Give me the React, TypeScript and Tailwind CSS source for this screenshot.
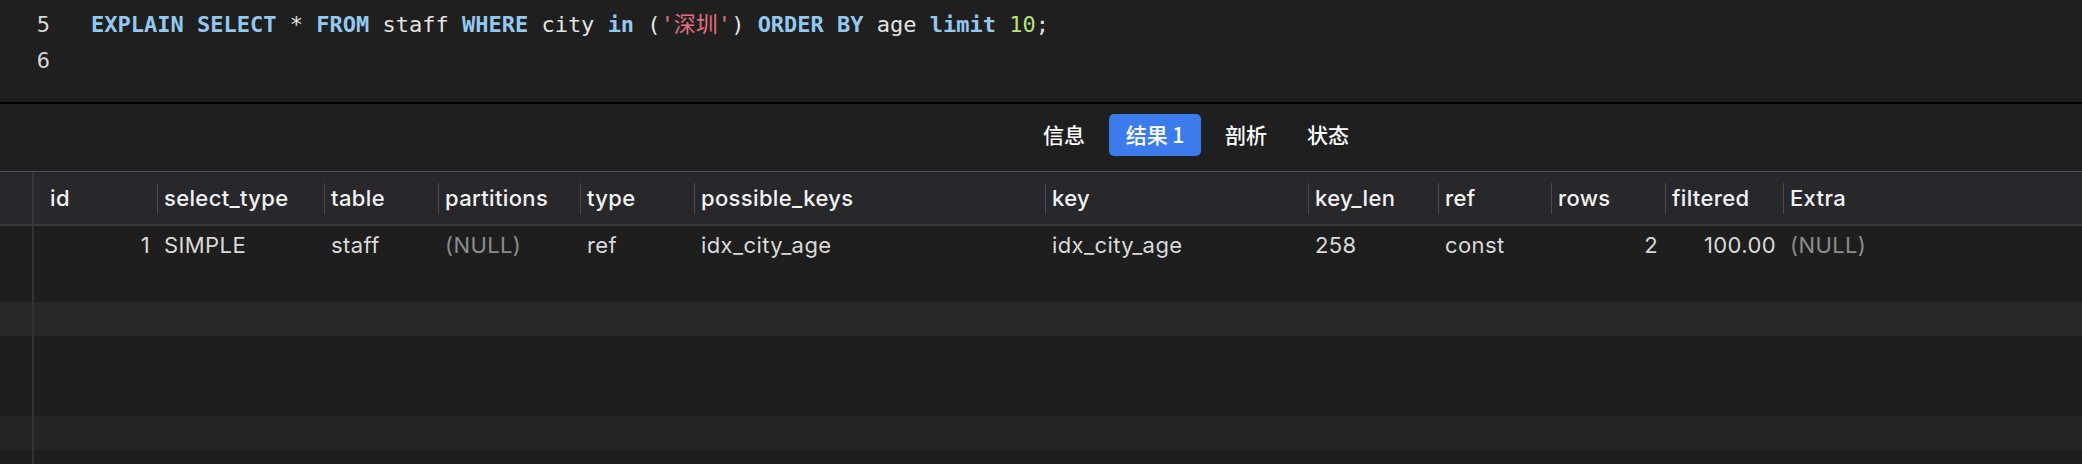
import React from 'react';

type Tok = { t: string; c?: 'kw' | 'str' | 'num' };

const KW = 'text-[#94c9ef] font-bold';

const line5: Tok[] = [
  { t: 'EXPLAIN', c: 'kw' }, { t: ' ' }, { t: 'SELECT', c: 'kw' }, { t: ' * ' },
  { t: 'FROM', c: 'kw' }, { t: ' staff ' }, { t: 'WHERE', c: 'kw' }, { t: ' city ' },
  { t: 'in', c: 'kw' }, { t: ' (' }, { t: "'深圳'", c: 'str' }, { t: ') ' },
  { t: 'ORDER BY', c: 'kw' }, { t: ' age ' }, { t: 'limit', c: 'kw' }, { t: ' ' },
  { t: '10', c: 'num' }, { t: ';' },
];

function tokClass(c?: Tok['c']) {
  if (c === 'kw') return KW;
  if (c === 'str') return 'text-[#e0707f]';
  if (c === 'num') return 'text-[#b8e27b]';
  return 'text-[#e4e4e4]';
}

type Col = { name: string; w: string; right?: boolean };

const cols: Col[] = [
  { name: 'id', w: 'w-[123px]', right: true },
  { name: 'select_type', w: 'w-[167px]' },
  { name: 'table', w: 'w-[114px]' },
  { name: 'partitions', w: 'w-[142px]' },
  { name: 'type', w: 'w-[114px]' },
  { name: 'possible_keys', w: 'w-[351px]' },
  { name: 'key', w: 'w-[263px]' },
  { name: 'key_len', w: 'w-[130px]' },
  { name: 'ref', w: 'w-[113px]' },
  { name: 'rows', w: 'w-[114px]', right: true },
  { name: 'filtered', w: 'w-[118px]', right: true },
  { name: 'Extra', w: 'flex-1' },
];

const row = ['1', 'SIMPLE', 'staff', '(NULL)', 'ref', 'idx_city_age', 'idx_city_age', '258', 'const', '2', '100.00', '(NULL)'];

const tabs = [
  { t: '信息', w: 'w-[74px]' },
  { t: '结果 1', w: 'w-[92px]' },
  { t: '剖析', w: 'w-[74px]' },
  { t: '状态', w: 'w-[74px]' },
];

const gridFont = "font-['Inter','Noto_Sans_CJK_SC',sans-serif]";

export default function App() {
  return (
    <div className="w-[2082px] h-[464px] overflow-hidden bg-[#1f1f1f] flex flex-col">
      {/* editor */}
      <div className="h-[102px] pt-[7px] font-['DejaVu_Sans_Mono','Noto_Sans_CJK_SC',monospace] text-[22px] leading-[36px]">
        <div className="flex">
          <span className="w-[50px] text-right text-[#d8d8d8]">5</span>
          <span className="ml-[41px] whitespace-pre">
            {line5.map((k, i) => (
              <span key={i} className={tokClass(k.c)}>{k.t}</span>
            ))}
          </span>
        </div>
        <div className="flex">
          <span className="w-[50px] text-right text-[#d8d8d8]">6</span>
        </div>
      </div>
      <div className="h-[2px] bg-black" />

      {/* result tabs */}
      <div className="h-[67px] pt-[10px] pl-[1027px] flex items-start gap-[8px] font-['Noto_Sans_CJK_SC',sans-serif] text-[21px] font-medium text-white">
        {tabs.map((t, i) => (
          <div
            key={t.t}
            className={
              `${t.w} h-[42px] rounded-[5px] flex items-center justify-center ` +
              (i === 1 ? 'bg-[#3b7bec]' : '')
            }
          >
            {t.t}
          </div>
        ))}
      </div>
      <div className="h-px bg-[#505052]" />

      {/* result grid */}
      <div className={`flex-1 flex flex-col ${gridFont} text-[22px]`}>
        <div className="h-[52px] flex bg-[#28282c]">
          <div className="w-[34px] border-r-2 border-[#38383c] shrink-0" />
          {cols.map((c, i) => (
            <div key={c.name} className={`${c.w} shrink-0 flex items-center`}>
              {i > 0 && <div className="w-px h-[31px] bg-[#4a4a4e]" />}
              <span className={`${i === 0 ? 'pl-[16px]' : 'pl-[6px]'} font-medium tracking-[0.35px] text-[#f2f2f2]`}>{c.name}</span>
            </div>
          ))}
        </div>
        <div className="h-[2px] bg-[#3a3a3e]" />
        <div className="flex-1 flex flex-col bg-[#1e1e1e]">
          <div className="h-[38px] flex">
            <div className="w-[34px] border-r-2 border-[#333335] shrink-0" />
            {cols.map((c, i) => (
              <div
                key={c.name}
                className={`${c.w} shrink-0 flex items-center tracking-[0.4px] ${c.right ? 'justify-end pr-[7px]' : 'pl-[7px]'}`}
              >
                <span className={row[i] === '(NULL)' ? 'text-[#8c8c8c]' : 'text-[#dadada]'}>{row[i]}</span>
              </div>
            ))}
          </div>
          {[
            { h: 'h-[38px]', bg: '' },
            { h: 'h-[34px]', bg: 'bg-[#282828]' },
            { h: 'h-[80px]', bg: '' },
            { h: 'h-[34px]', bg: 'bg-[#242424]' },
            { h: 'flex-1', bg: '' },
          ].map((r, i) => (
            <div key={i} className={`${r.h} ${r.bg} flex`}>
              <div className="w-[34px] border-r-2 border-[#333335] shrink-0" />
            </div>
          ))}
        </div>
      </div>
    </div>
  );
}
